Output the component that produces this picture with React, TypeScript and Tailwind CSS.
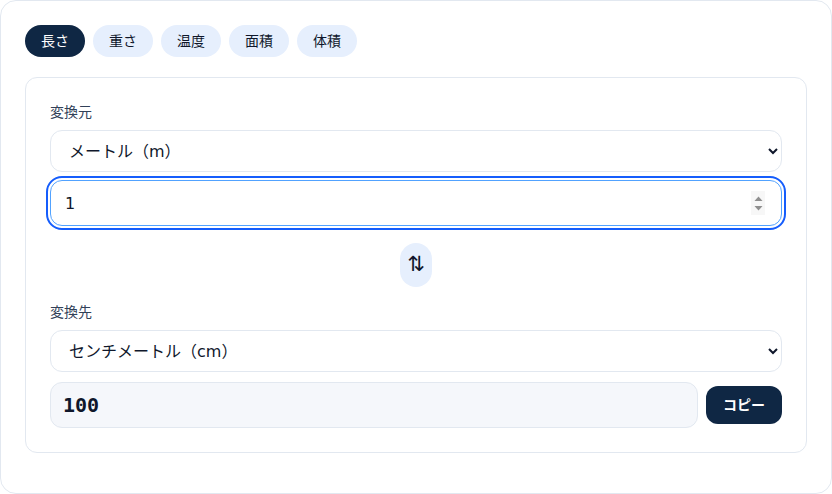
import { useState } from "react";

const tabs = ["長さ", "重さ", "温度", "面積", "体積"];

const Spinner = () => (
    <div className="pointer-events-none absolute right-[17px] top-1/2 flex h-[24px] w-[14px] -translate-y-1/2 flex-col items-center justify-center gap-[5px] bg-[#f7f7f7]">
        <svg width="9" height="5" viewBox="0 0 9 5">
            <path d="M0.5 5 L4.5 0.5 L8.5 5 Z" fill="#8f8f8f" />
        </svg>
        <svg width="9" height="5" viewBox="0 0 9 5">
            <path d="M0.5 0 L4.5 4.5 L8.5 0 Z" fill="#8f8f8f" />
        </svg>
    </div>
);

const App = () => {
    const [active, setActive] = useState(0);
    const [value, setValue] = useState("1");

    return (
        <div className="min-h-screen bg-white font-['DejaVu_Sans','Noto_Sans_CJK_JP',sans-serif] text-slate-900">
            <div className="h-[494px] rounded-2xl border border-slate-200 bg-white p-6">
                <div className="flex gap-2">
                    {tabs.map((t, i) => (
                        <button
                            key={t}
                            onClick={() => setActive(i)}
                            className={
                                i === active
                                    ? "h-8 rounded-full bg-[#0f2744] px-4 text-sm text-white"
                                    : "h-8 rounded-full bg-[#e6effd] px-4 text-sm text-slate-900"
                            }
                        >
                            {t}
                        </button>
                    ))}
                </div>

                <div className="mt-5 rounded-xl border border-slate-200 bg-white p-6">
                    <label className="mb-2 block text-sm leading-5 text-slate-700">変換元</label>
                    <select className="block h-[42px] w-full rounded-xl border border-slate-200 bg-white px-[14px] text-base text-slate-900">
                        <option>メートル（m）</option>
                        <option>センチメートル（cm）</option>
                    </select>
                    <div className="relative mt-2">
                        <input
                            type="text"
                            value={value}
                            onChange={(e) => setValue(e.target.value)}
                            className="block h-[46px] w-full rounded-xl border border-blue-400 bg-white px-[14px] text-base text-slate-900 outline-2 outline-offset-2 outline-blue-600"
                        />
                        <Spinner />
                    </div>

                    <div className="mt-[17px] mb-[15px] flex justify-center">
                        <button className="flex h-11 w-8 items-center justify-center rounded-full bg-[#e6effd] text-[21px] text-slate-900">
                            ⇅
                        </button>
                    </div>

                    <label className="mb-2 block text-sm leading-5 text-slate-700">変換先</label>
                    <select
                        defaultValue="cm"
                        className="block h-[42px] w-full rounded-xl border border-slate-200 bg-white px-[14px] text-base text-slate-900"
                    >
                        <option value="m">メートル（m）</option>
                        <option value="cm">センチメートル（cm）</option>
                    </select>
                    <div className="mt-[10px] flex items-center gap-2">
                        <div className="flex h-[46px] flex-1 items-center rounded-xl border border-slate-200 bg-[#f5f7fb] px-3 font-['DejaVu_Sans_Mono',monospace] text-xl font-bold text-slate-900">
                            100
                        </div>
                        <button className="h-[38px] rounded-xl bg-[#0f2744] px-[17px] text-sm font-bold text-white">
                            コピー
                        </button>
                    </div>
                </div>
            </div>
        </div>
    );
};

export default App;
